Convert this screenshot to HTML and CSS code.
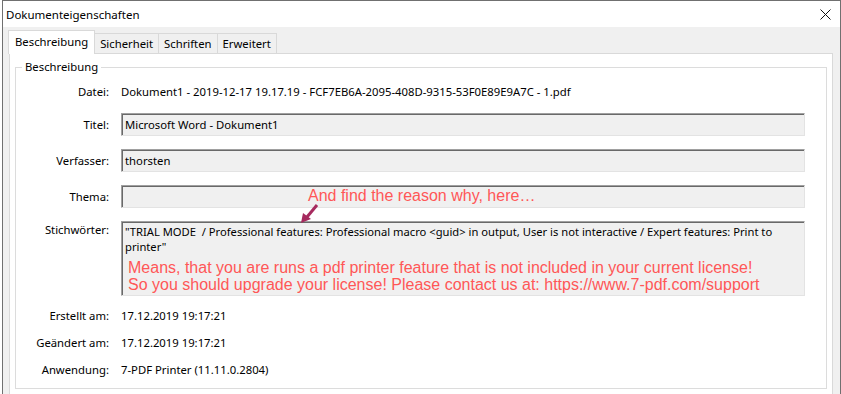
FILE: index.html
```html
<!DOCTYPE html>
<html lang="de">
<head>
    <meta charset="UTF-8">
    <meta name="viewport" content="width=device-width, initial-scale=1.0">
    <title>Dokumenteigenschaften</title>
    <link rel="stylesheet" href="styles.css">
</head>
<body>
    <div class="window">
        <div class="titlebar">
            <span class="title">Dokumenteigenschaften</span>
            <svg class="close" width="11" height="11" viewBox="0 0 11 11">
                <path d="M0.5 0.5 L10.5 10.5 M10.5 0.5 L0.5 10.5" stroke="#111" stroke-width="1" fill="none"/>
            </svg>
        </div>
        <div class="content">
            <div class="tabs">
                <div class="tab active">Beschreibung</div>
                <div class="tab">Sicherheit</div>
                <div class="tab">Schriften</div>
                <div class="tab">Erweitert</div>
            </div>
            <div class="panel">
                <fieldset class="group">
                    <legend>Beschreibung</legend>
                    <div class="form">
                        <div class="label">Datei:</div>
                        <div class="value">Dokument1 - 2019-12-17 19.17.19 - FCF7EB6A-2095-408D-9315-53F0E89E9A7C - 1.pdf</div>

                        <div class="label mid">Titel:</div>
                        <div class="field">Microsoft Word - Dokument1</div>

                        <div class="label mid">Verfasser:</div>
                        <div class="field">thorsten</div>

                        <div class="label mid">Thema:</div>
                        <div class="field">
                            <span class="note hint">And find the reason why, here…</span>
                        </div>

                        <div class="label top">Stichwörter:</div>
                        <div class="field keywords">
                            <p class="kw-text">"TRIAL MODE&nbsp; / Professional features: Professional macro &lt;guid&gt; in output, User is not interactive / Expert features: Print to printer"</p>
                            <p class="note">Means, that you are runs a pdf printer feature that is not included in your current license!</p>
                            <p class="note">So you should upgrade your license! Please contact us at: https://www.7-pdf.com/support</p>
                            <svg class="arrow" width="22" height="22" viewBox="0 0 22 22">
                                <path d="M18 1 L8 13" stroke="#a62a5e" stroke-width="3" fill="none"/>
                                <path d="M2 19 L4 9 L12 15 Z" fill="#a62a5e"/>
                            </svg>
                        </div>

                        <div class="label low">Erstellt am:</div>
                        <div class="value low">17.12.2019 19:17:21</div>

                        <div class="label low">Geändert am:</div>
                        <div class="value low">17.12.2019 19:17:21</div>

                        <div class="label low">Anwendung:</div>
                        <div class="value low">7-PDF Printer (11.11.0.2804)</div>
                    </div>
                </fieldset>
            </div>
        </div>
    </div>
</body>
</html>
```

FILE: styles.css
```css
body {
    margin: 0;
    background: #ffffff;
    font-family: "Noto Sans", "Open Sans", sans-serif;
    font-size: 11.3px;
    color: #000;
}
.window {
    margin-left: 2px;
    width: 837px;
    height: 400px;
    border: 1px solid #707070;
    border-bottom: none;
    background: #f0f0f0;
    overflow: hidden;
}
.titlebar {
    height: 26px;
    background: #ffffff;
    display: flex;
    align-items: center;
    justify-content: space-between;
    padding: 0 9px 0 3px;
}
.title {
    font-size: 11.5px;
}
.content {
    padding: 3px 6px 0 5px;
}
.tabs {
    display: flex;
    align-items: flex-end;
    height: 23px;
    position: relative;
    z-index: 1;
}
.tab {
    height: 19px;
    line-height: 19px;
    padding: 0 5px;
    border: 1px solid #d9d9d9;
    border-bottom: none;
    border-left: none;
    background: #f0f0f0;
}
.tab.active {
    height: 23px;
    line-height: 21px;
    padding: 0 6px;
    background: #ffffff;
    border-left: 1px solid #d9d9d9;
    margin-bottom: -1px;
}
.panel {
    width: 824px;
    height: 360px;
    margin-left: 1px;
    background: #ffffff;
    border: 1px solid #d9d9d9;
    padding: 5px 0 0 5px;
    box-sizing: border-box;
}
.group {
    margin: 0;
    width: 812px;
    box-sizing: border-box;
    border: 1px solid #dcdcdc;
    padding: 9px 21px 0 0;
    height: 330px;
}
.group legend {
    padding: 0 3px;
    margin-left: 6px;
    line-height: 16px;
}
.form {
    display: grid;
    grid-template-columns: 93px 1fr;
    column-gap: 12px;
    row-gap: 13px;
    position: relative;
}
.label {
    text-align: right;
    line-height: 16px;
}
.label.mid {
    line-height: 23px;
}
.label.top {
    padding-top: 1px;
}
.value {
    line-height: 16px;
}
.low {
    line-height: 14px;
}
.field {
    height: 23px;
    box-sizing: border-box;
    background: #f0f0f0;
    border: 1px solid;
    border-color: #a0a0a0 #e3e3e3 #e3e3e3 #a0a0a0;
    box-shadow: inset 1px 1px 0 #696969;
    padding: 0 3px;
    line-height: 21px;
    white-space: nowrap;
    overflow: hidden;
}
.field.keywords {
    height: 75px;
    white-space: normal;
    overflow: visible;
    position: relative;
    padding: 2px 3px 0 3px;
}
.kw-text {
    margin: 0;
    font-size: 11.2px;
    line-height: 15px;
}
.note {
    margin: 0;
    font-family: "Liberation Sans", Arial, sans-serif;
    font-size: 16px;
    line-height: 17px;
    color: #ff5757;
    padding-left: 3px;
}
.kw-text + .note {
    margin-top: 5px;
}
.hint {
    display: inline-block;
    padding-left: 183px;
    line-height: 20px;
}
.arrow {
    position: absolute;
    left: 177px;
    top: -18px;
}
```
